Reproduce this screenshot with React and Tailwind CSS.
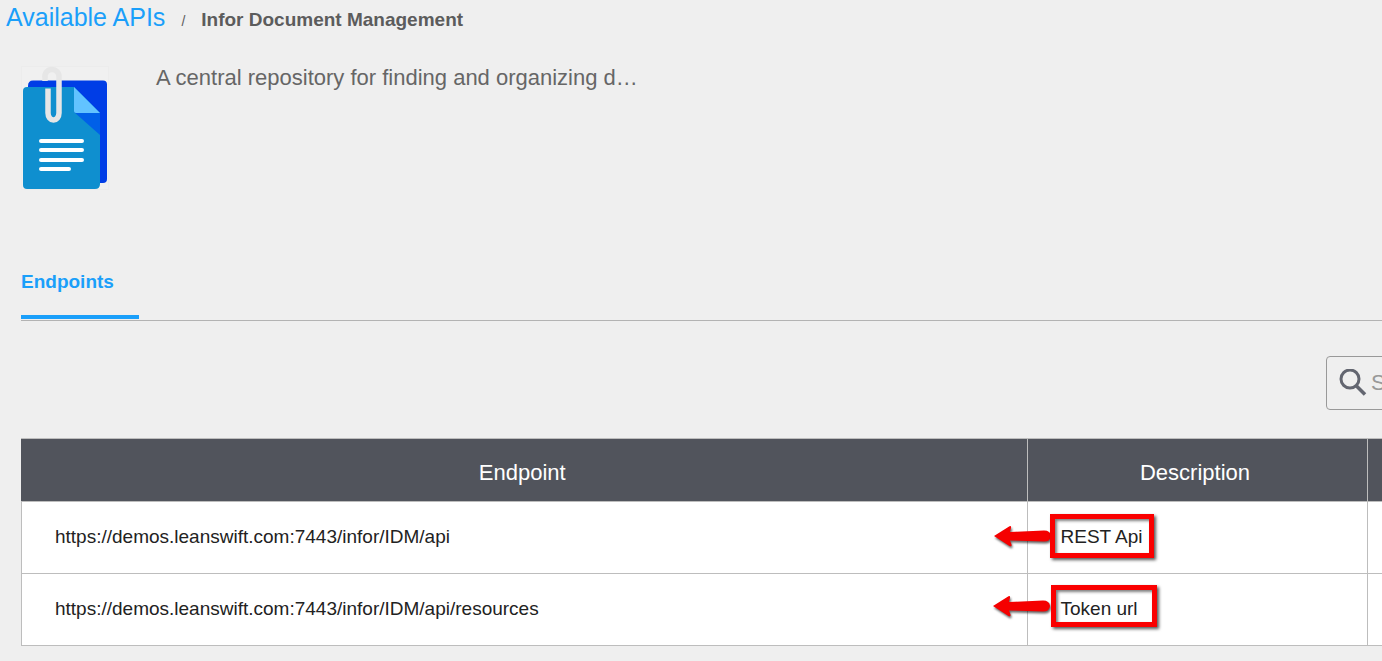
const endpoints = [
  { url: "https://demos.leanswift.com:7443/infor/IDM/api", description: "REST Api" },
  { url: "https://demos.leanswift.com:7443/infor/IDM/api/resources", description: "Token url" },
];

const highlights = [
  { box: "left-[22px] top-3 h-11 w-[104px]", arrow: "-left-[36px] top-5" },
  { box: "left-[23px] top-[11px] h-[42px] w-[106px]", arrow: "-left-[37px] top-[18px]" },
];

function DocumentIcon() {
  return (
    <svg width="88" height="126" viewBox="0 0 88 126" aria-hidden="true" className="shrink-0">
      <rect x="0.5" y="0.5" width="87" height="123" fill="#f0f0f0" stroke="#ececec" />
      <path d="M12 14.500H82Q86 14.500 86 18.500V113Q86 117 82 117H7V20Q7 14.500 12 14.500Z" fill="#003de6" />
      <path d="M6 21H53L79 47V118Q79 123 74 123H6Q2 123 2 119V25Q2 21 6 21Z" fill="#0f8fcf" />
      <path d="M53 46L79 46V69Z" fill="#0060e8" />
      <path d="M53 21L79 47H55Q53 47 53 45Z" fill="#62c3ff" />
      <path
        d="M24 15V11.500A7 7 0 0 1 31 3.500A7 7 0 0 1 38 11V47A5.500 7 0 0 1 27 47V22.500"
        fill="none"
        stroke="#e6e6e6"
        strokeWidth="5.5"
      />
      <path d="M20 75H61M20 84H61M20 94H61M20 103H48" stroke="white" strokeWidth="4" strokeLinecap="round" />
    </svg>
  );
}

function Arrow({ className }) {
  return (
    <svg
      width="62"
      height="26"
      viewBox="0 0 62 26"
      aria-hidden="true"
      className={`absolute drop-shadow-[1px_2px_1px_rgba(0,0,0,0.6)] ${className}`}
    >
      <path
        d="M2 14L17.500 4.200Q19.500 3.500 19 6L18 10L52 8.500Q58.500 8.500 59 14Q58.500 19.500 52 19.500L18 18.500L19.500 22.500Q20 25 17.500 24Z"
        fill="#f50000"
      />
    </svg>
  );
}

function SearchIcon() {
  return (
    <svg width="28" height="28" viewBox="0 0 28 28" fill="none" stroke="#636670" strokeWidth="3" aria-hidden="true" className="shrink-0">
      <circle cx="11" cy="10" r="9" />
      <path d="M17 16.500L26 25.500" strokeWidth="3.5" />
    </svg>
  );
}

export default function App() {
  return (
    <div className="min-h-screen overflow-hidden bg-[#efefef] font-['Liberation_Sans',Arial,sans-serif] text-[#5c5c5c]">
      <nav aria-label="Breadcrumb" className="flex h-9 items-baseline pl-1.5 pt-px">
        <a href="#apis" className="text-[25px] leading-8 text-[#1a9ffa]">Available APIs</a>
        <span className="px-4 text-sm">/</span>
        <h1 className="text-[19px] leading-8 font-bold">Infor Document Management</h1>
      </nav>

      <header className="flex items-start gap-[47px] pt-[30px] pl-[21px]">
        <DocumentIcon />
        <p className="text-[22px] leading-6 text-[#666]">A central repository for finding and organizing d…</p>
      </header>

      <main className="pl-[21px]">
        <div role="tablist" className="mt-[68px] flex h-[61px] items-start border-b border-[#b3b3b3]">
          <button
            role="tab"
            aria-selected="true"
            className="h-[59px] w-[118px] border-b-4 border-[#1a9ffa] pt-2 pb-5 text-left text-[19px] leading-7 font-bold text-[#1a9ffa]"
          >
            Endpoints
          </button>
        </div>

        <div className="mt-[35px] flex justify-end">
          <div className="w-14 overflow-hidden">
            <label className="flex h-[54px] w-80 items-center gap-1 rounded-sm border border-[#999] pl-3">
              <SearchIcon />
              <input type="search" aria-label="Search endpoints" placeholder="Search" className="min-w-0 flex-1 text-[22px] leading-6 outline-none placeholder:text-[#999]" />
            </label>
          </div>
        </div>

        <table className="mt-7 w-full table-fixed border-collapse bg-white text-[19px] text-[#222]">
          <colgroup>
            <col />
            <col className="w-[340px]" />
            <col className="w-[15px]" />
          </colgroup>
          <thead>
            <tr className="h-[63px] bg-[#51545c] text-[22px] text-white">
              <th className="border border-[#bdbdbd] border-l-[#51545c] pt-1 pr-1 font-normal">Endpoint</th>
              <th className="border border-[#bdbdbd] pt-1 pr-1 font-normal">Description</th>
              <td className="border border-r-0 border-[#bdbdbd]" />
            </tr>
          </thead>
          <tbody>
            {endpoints.map((endpoint, index) => (
              <tr key={endpoint.url} className="h-[72px]">
                <td className="border border-[#bdbdbd] px-[33px]">{endpoint.url}</td>
                <td className="border border-[#bdbdbd] p-0">
                  <div className="relative flex h-[71px] items-center pl-[33px]">
                    <Arrow className={highlights[index].arrow} />
                    <span
                      aria-hidden="true"
                      className={`absolute border-[5px] border-[#fa0000] shadow-[2px_2px_3px_rgba(0,0,0,0.65),inset_2px_2px_3px_rgba(0,0,0,0.5)] ${highlights[index].box}`}
                    />
                    <span className="relative">{endpoint.description}</span>
                  </div>
                </td>
                <td className="border border-r-0 border-[#bdbdbd]" />
              </tr>
            ))}
          </tbody>
        </table>
      </main>
    </div>
  );
}
